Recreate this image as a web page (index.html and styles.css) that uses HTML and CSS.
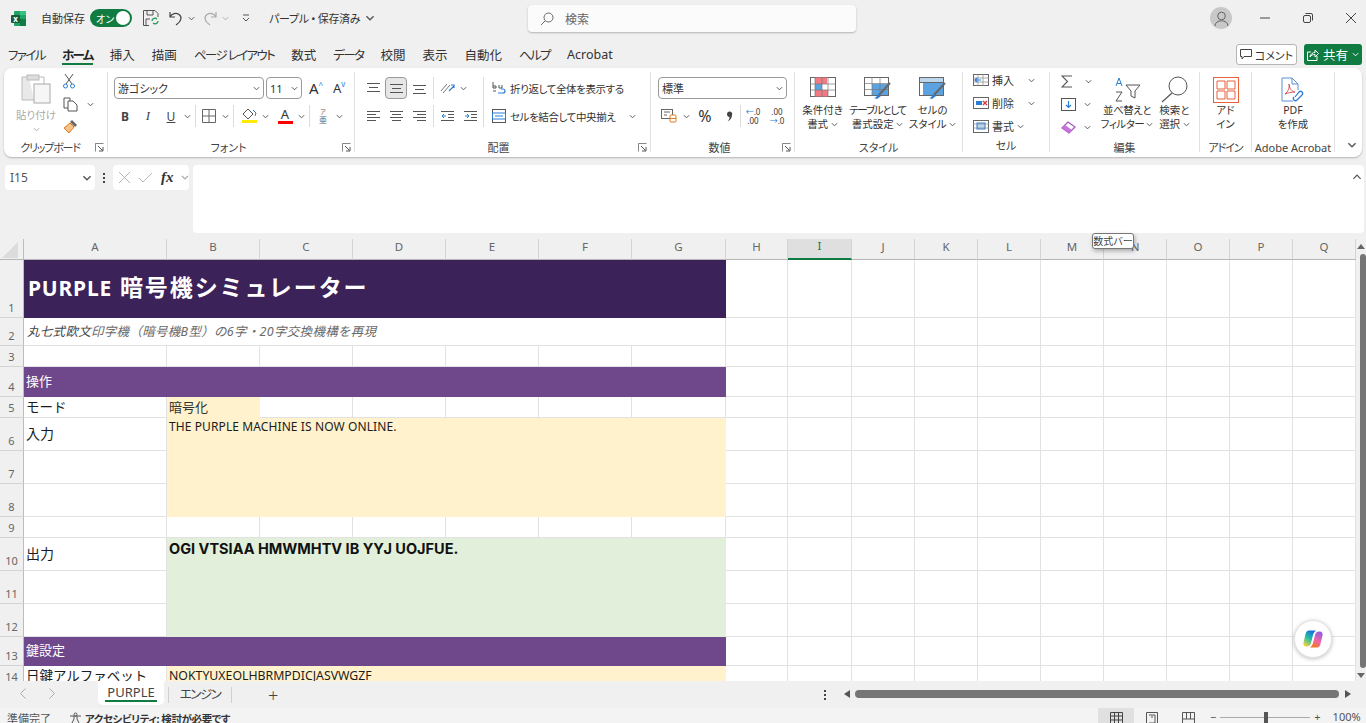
FILE: index.html
```html
<!DOCTYPE html>
<html lang="ja">

<head>
    <meta charset="UTF-8">
    <title>パープル - Excel</title>
    <link rel="stylesheet" href="styles.css">
</head>

<body>
    <svg class="defs" width="0" height="0">
        <symbol id="chev" viewBox="0 0 8 5"><path d="M1 1l3 3 3-3" fill="none" stroke="currentColor" stroke-width="1.1"/></symbol>
        <symbol id="launch" viewBox="0 0 9 9"><path d="M.5 5V.5H8.500M.5 .5V8.500" fill="none" stroke="#888"/><path d="M3 3l4.500 4.500M4 8h4V4" fill="none" stroke="#555"/></symbol>
    </svg>

    <header class="titlebar">
        <svg class="xl-logo" width="15" height="15" viewBox="0 0 15 15"><rect x="3" width="12" height="15" rx="1" fill="#21a366"/><rect x="9" width="6" height="4" fill="#33c481"/><rect x="9" y="8" width="6" height="7" fill="#107c41"/><rect y="4" width="9" height="8" rx="1" fill="#185c37"/><text x="4.500" y="10.500" text-anchor="middle" class="xl-x">x</text></svg>
        <span class="autosave">自動保存</span>
        <span class="toggle"><span>オン</span><i></i></span>
        <svg class="qa-save" width="16" height="16" viewBox="0 0 16 16"><path d="M.5 .5H12L15 3.500V7M6 15.500H.5V.5M4 .5V5H10V.5M3 15V9H7" fill="none" stroke="#555"/><path d="M9 11a3 3 0 0 1 5-2M15 11a3 3 0 0 1-5 2" fill="none" stroke="#2e9e5b" stroke-width="1.400"/></svg>
        <svg class="qa-undo" width="14" height="15" viewBox="0 0 14 15"><path d="M1 1V6H6M1 6C3 2.500 7 1.500 10 3.500S13 10 7 14" fill="none" stroke="#444" stroke-width="1.200"/></svg>
        <svg class="qa-chev" width="7" height="5"><use href="#chev"/></svg>
        <svg class="qa-redo" width="14" height="15" viewBox="0 0 14 15"><path d="M13 1V6H8M13 6C11 2.500 7 1.500 4 3.500S1 10 7 14" fill="none" stroke="#aaa" stroke-width="1.200"/></svg>
        <svg class="qa-chev pale" width="7" height="5"><use href="#chev"/></svg>
        <svg class="qa-more" width="8" height="8" viewBox="0 0 8 8"><path d="M1 1H7M1 4l3 3 3-3" fill="none" stroke="#555"/></svg>
        <span class="docname">パープル • 保存済み</span>
        <svg class="doc-chev" width="10" height="6"><use href="#chev"/></svg>
        <div class="searchbox">
            <svg width="14" height="14" viewBox="0 0 14 14"><circle cx="8.500" cy="5.500" r="4.500" fill="none" stroke="#666"/><path d="M5 9l-4 4" stroke="#666"/></svg>
            <span>検索</span>
        </div>
        <div class="win-btns">
            <span class="avatar"><svg width="15" height="15" viewBox="0 0 15 15"><circle cx="7.500" cy="5" r="3.800" fill="none" stroke="#666"/><path d="M1 15c0-7 13-7 13 0" fill="none" stroke="#666"/></svg></span>
            <svg class="win" width="10" height="10" viewBox="0 0 10 10"><path d="M0 5H10" stroke="#444"/></svg>
            <svg class="win" width="10" height="10" viewBox="0 0 10 10"><rect x=".5" y="2.500" width="7" height="7" rx="1.500" fill="none" stroke="#444"/><path d="M2.500 .5H8a1.500 1.500 0 0 1 1.500 1.500V7.500" fill="none" stroke="#444"/></svg>
            <svg class="win" width="10" height="10" viewBox="0 0 10 10"><path d="M0 0L10 10M10 0L0 10" stroke="#444"/></svg>
        </div>
    </header>

    <nav class="tabs">
        <a class="kana">ファイル</a>
        <a class="kana active">ホーム</a>
        <a>挿入</a>
        <a>描画</a>
        <a class="kana">ページ レイアウト</a>
        <a>数式</a>
        <a class="kana">データ</a>
        <a>校閲</a>
        <a>表示</a>
        <a>自動化</a>
        <a class="kana">ヘルプ</a>
        <a>Acrobat</a>
        <button class="comment-btn">
            <svg width="12" height="11" viewBox="0 0 12 11"><path d="M.5 .5H11.500V7.500H4L2 10V7.500H.5Z" fill="none" stroke="#444"/></svg>
            コメント
        </button>
        <button class="share-btn">
            <svg width="12" height="12" viewBox="0 0 12 12"><path d="M4 3H.5V11.500H10V7M3 8C3 5 6 3.500 8 3.500V1L11.500 4.500 8 8V5.500C6 5.500 4 6 3 8Z" fill="none" stroke="#fff"/></svg>
            共有
            <svg class="white" width="7" height="5"><use href="#chev"/></svg>
        </button>
    </nav>

    <section class="ribbon">
        <div class="group g-clip">
            <div class="body clip-body">
                <div class="paste">
                    <svg width="30" height="30" viewBox="0 0 30 30"><path d="M8 3H1V26H13" fill="#e9e9e9" stroke="#bbb"/><rect x="6" y="1" width="12" height="5" fill="#ddd" stroke="#bbb"/><path d="M18 3H23V10" fill="none" stroke="#bbb"/><rect x="13" y="10" width="16" height="19" fill="#f6f6f6" stroke="#aaa"/></svg>
                    <span>貼り付け</span>
                    <svg class="pale" width="7" height="5"><use href="#chev"/></svg>
                </div>
                <div class="clip-tools">
                    <svg width="12" height="16" viewBox="0 0 12 16"><path d="M2 1l7 10M10 1L3 11" stroke="#555"/><circle cx="2.500" cy="13" r="2" fill="none" stroke="#2b7cd3"/><circle cx="9.500" cy="13" r="2" fill="none" stroke="#2b7cd3"/></svg>
                    <span class="clip-copy">
                        <svg width="15" height="15" viewBox="0 0 15 15"><path d="M5 11H1V1H7V4" fill="none" stroke="#555"/><path d="M5 4H10L14 8V14H5Z" fill="#fff" stroke="#555"/></svg>
                        <svg class="copy-chev" width="7" height="5"><use href="#chev"/></svg>
                    </span>
                    <svg width="15" height="15" viewBox="0 0 15 15"><path d="M9 1l5 5-2 2-5-5Z" fill="#666"/><path d="M7 4L1 9l5 5 5-6Z" fill="#f5c28c" stroke="#e07a1f"/></svg>
                </div>
            </div>
            <div class="label">クリップボード</div>
            <svg class="launcher" width="9" height="9"><use href="#launch"/></svg>
        </div>

        <div class="group g-font">
            <div class="body rows">
                <div class="row">
                    <span class="select font-select">游ゴシック<svg width="7" height="5"><use href="#chev"/></svg></span>
                    <span class="select size-select">11<svg width="7" height="5"><use href="#chev"/></svg></span>
                    <span class="grow-a">A<sup>^</sup></span>
                    <span class="shrink-a">A<sup>v</sup></span>
                </div>
                <div class="row">
                    <span class="tool fmt bold">B</span>
                    <span class="tool fmt ital">I</span>
                    <span class="tool fmt under">U</span>
                    <svg class="mini" width="7" height="5"><use href="#chev"/></svg>
                    <i class="sep"></i>
                    <span class="tool"><svg width="14" height="14" viewBox="0 0 14 14"><path d="M.5 .5H13.500V13.500H.5ZM7 .5V13.500M.5 7H13.500" fill="none" stroke="#666"/></svg></span>
                    <svg class="mini" width="7" height="5"><use href="#chev"/></svg>
                    <i class="sep"></i>
                    <span class="tool fill-tool"><svg width="15" height="16" viewBox="0 0 15 16"><path d="M6 1L1 6l5 5 5-5Z" fill="none" stroke="#555"/><path d="M11 2l3 3-1 3" fill="none" stroke="#2b7cd3"/><rect y="12" width="15" height="3" fill="#ffeb00"/></svg></span>
                    <svg class="mini" width="7" height="5"><use href="#chev"/></svg>
                    <span class="tool color-a"><em>A</em></span>
                    <svg class="mini" width="7" height="5"><use href="#chev"/></svg>
                    <i class="sep"></i>
                    <span class="tool phonetic"><small>ア</small>亜</span>
                    <svg class="mini" width="7" height="5"><use href="#chev"/></svg>
                </div>
            </div>
            <div class="label">フォント</div>
            <svg class="launcher" width="9" height="9"><use href="#launch"/></svg>
        </div>

        <div class="group g-align">
            <div class="body align-body">
                <div class="rows">
                    <div class="row">
                        <span class="tool"><svg width="13" height="11" viewBox="0 0 13 11"><path d="M0 .5H13M2 4.500H11M0 8.500H13" stroke="#555"/></svg></span>
                        <span class="tool on"><svg width="13" height="11" viewBox="0 0 13 11"><path d="M0 1.500H13M2 5.500H11M0 9.500H13" stroke="#555"/></svg></span>
                        <span class="tool"><svg width="13" height="11" viewBox="0 0 13 11"><path d="M0 2.500H13M2 6.500H11M0 10.500H13" stroke="#555"/></svg></span>
                        <i class="sep"></i>
                        <span class="tool"><svg width="16" height="14" viewBox="0 0 16 14"><path d="M2 10L8 3M4 12l7-8" stroke="#777"/><path d="M10 10l5-5M12 4h3v3" fill="none" stroke="#2b7cd3" stroke-width="1.200"/></svg></span>
                        <svg class="mini" width="7" height="5"><use href="#chev"/></svg>
                    </div>
                    <div class="row">
                        <span class="tool"><svg width="13" height="11" viewBox="0 0 13 11"><path d="M0 .5H13M0 3.500H9M0 6.500H13M0 9.500H9" stroke="#555"/></svg></span>
                        <span class="tool"><svg width="13" height="11" viewBox="0 0 13 11"><path d="M0 .5H13M2 3.500H11M0 6.500H13M2 9.500H11" stroke="#555"/></svg></span>
                        <span class="tool"><svg width="13" height="11" viewBox="0 0 13 11"><path d="M0 .5H13M4 3.500H13M0 6.500H13M4 9.500H13" stroke="#555"/></svg></span>
                        <i class="sep"></i>
                        <span class="tool"><svg width="13" height="11" viewBox="0 0 13 11"><path d="M0 .5H13M7 3.500H13M7 6.500H13M0 9.500H13" stroke="#555"/><path d="M5 5H1M3 3L1 5l2 2" fill="none" stroke="#2b7cd3"/></svg></span>
                        <span class="tool"><svg width="13" height="11" viewBox="0 0 13 11"><path d="M0 .5H13M7 3.500H13M7 6.500H13M0 9.500H13" stroke="#555"/><path d="M1 5H5M3 3l2 2-2 2" fill="none" stroke="#2b7cd3"/></svg></span>
                    </div>
                </div>
                <i class="sep tall"></i>
                <div class="rows wrap-col">
                    <div class="row textrow">
                        <svg width="14" height="14" viewBox="0 0 14 14"><path d="M1 1V7M1 5h3v2H1M7 4v3h3V4M1 10h3" fill="none" stroke="#555"/><path d="M6 12h5a2 2 0 0 0 0-4H9" fill="none" stroke="#2b7cd3" stroke-width="1.200"/></svg>
                        <span>折り返して全体を表示する</span>
                    </div>
                    <div class="row textrow">
                        <svg width="14" height="14" viewBox="0 0 14 14"><rect x=".5" y=".5" width="13" height="13" fill="none" stroke="#555"/><rect x=".5" y="4" width="13" height="6" fill="#fff" stroke="#2b7cd3"/><path d="M3 7H11" stroke="#2b7cd3"/></svg>
                        <span>セルを結合して中央揃え</span>
                        <svg class="merge-chev" width="7" height="5"><use href="#chev"/></svg>
                    </div>
                </div>
            </div>
            <div class="label">配置</div>
            <svg class="launcher" width="9" height="9"><use href="#launch"/></svg>
        </div>

        <div class="group g-num">
            <div class="body rows">
                <div class="row">
                    <span class="select num-select">標準<svg width="7" height="5"><use href="#chev"/></svg></span>
                </div>
                <div class="row num-tools">
                    <span class="tool"><svg width="16" height="14" viewBox="0 0 16 14"><rect x=".5" y=".5" width="11" height="9" fill="none" stroke="#666"/><path d="M3 3H9M3 6H6" stroke="#666"/><rect x="9" y="6" width="6" height="7" rx="1" fill="#fff" stroke="#e07a1f"/><path d="M9 9.500H15" stroke="#e07a1f"/></svg></span>
                    <svg class="mini" width="7" height="5"><use href="#chev"/></svg>
                    <span class="tool percent">%</span>
                    <span class="tool comma"><svg width="7" height="11" viewBox="0 0 7 11"><path d="M1 3a2.600 2.600 0 1 1 5 1C6 7 4 9.500 1.500 10.500 3 9 3.500 7.500 3.500 6 2 6 1 5 1 3Z" fill="#444"/></svg></span>
                    <i class="sep"></i>
                    <span class="tool dec"><b>←</b>.0<br>.00</span>
                    <span class="tool dec">.00<br><b>→</b>.0</span>
                </div>
            </div>
            <div class="label">数値</div>
            <svg class="launcher" width="9" height="9"><use href="#launch"/></svg>
        </div>

        <div class="group g-style">
            <div class="body bigs">
                <div class="big">
                    <svg width="26" height="20" viewBox="0 0 26 20"><rect x=".5" y=".5" width="25" height="19" fill="#fff" stroke="#666"/><path d="M5 .5H17V7H5ZM5 13H18V19.500H5Z" fill="#f27a85"/><rect x="5" y="7" width="7" height="6" fill="#5aa2e0"/><path d="M0 7H26M0 13H26M5 0V20M12 0V20M18 0V20" stroke="#777" stroke-width=".7"/></svg>
                    <span>条件付き<br>書式 <svg width="7" height="5"><use href="#chev"/></svg></span>
                </div>
                <div class="big">
                    <svg width="27" height="22" viewBox="0 0 27 22"><rect x=".5" y=".5" width="24" height="18" fill="#fff" stroke="#666"/><rect x="8" y="7" width="16" height="11" fill="#5aa2e0"/><path d="M0 6.500H25M0 12.500H25M8 0V19M16 0V19" stroke="#777" stroke-width=".7"/><path d="M26 6L15 18" stroke="#666" stroke-width="2"/><path d="M14 17l3 2-4 3-3-1c2 0 3-2 4-4Z" fill="#2b7cd3"/></svg>
                    <span><em class="tight">テーブルとして</em><br>書式設定 <svg width="7" height="5"><use href="#chev"/></svg></span>
                </div>
                <div class="big">
                    <svg width="27" height="22" viewBox="0 0 27 22"><rect x=".5" y=".5" width="24" height="18" fill="#fff" stroke="#666"/><rect x=".5" y=".5" width="24" height="5" fill="#bcd6ee" stroke="#666"/><rect x="4" y="6" width="20" height="12" fill="#5aa2e0"/><path d="M26 6L15 18" stroke="#666" stroke-width="2"/><path d="M14 17l3 2-4 3-3-1c2 0 3-2 4-4Z" fill="#2b7cd3"/></svg>
                    <span>セルの<br>スタイル <svg width="7" height="5"><use href="#chev"/></svg></span>
                </div>
            </div>
            <div class="label">スタイル</div>
        </div>

        <div class="group g-cells">
            <div class="body list">
                <div class="item">
                    <svg width="16" height="12" viewBox="0 0 16 12"><rect x=".5" y=".5" width="15" height="11" fill="#fff" stroke="#666"/><path d="M0 4H16M0 8H16M5 0V12M10 0V12" stroke="#888" stroke-width=".7"/><path d="M8 6H2M4 4L2 6l2 2" fill="none" stroke="#2b7cd3" stroke-width="1.200"/></svg>
                    <span>挿入</span>
                    <svg class="far" width="7" height="5"><use href="#chev"/></svg>
                </div>
                <div class="item">
                    <svg width="16" height="12" viewBox="0 0 16 12"><rect x=".5" y=".5" width="15" height="11" fill="#fff" stroke="#666"/><rect x="3" y="4" width="6" height="4" fill="#2b7cd3"/><path d="M10 4l4 4M14 4l-4 4" stroke="#d13438" stroke-width="1.200"/></svg>
                    <span>削除</span>
                    <svg class="far" width="7" height="5"><use href="#chev"/></svg>
                </div>
                <div class="item">
                    <svg width="16" height="14" viewBox="0 0 16 14"><rect x=".5" y="1.500" width="15" height="12" fill="#fff" stroke="#666"/><rect x="4" y="4" width="8" height="6" fill="#bcd6ee" stroke="#2b7cd3"/><path d="M0 5H16M0 9H16" stroke="#888" stroke-width=".7"/></svg>
                    <span>書式</span>
                    <svg class="near" width="7" height="5"><use href="#chev"/></svg>
                </div>
            </div>
            <div class="label">セル</div>
        </div>

        <div class="group g-edit">
            <div class="body bigs">
                <div class="list edit-list">
                    <div class="item"><svg width="12" height="13" viewBox="0 0 12 13"><path d="M11 1H1L6.500 6.500 1 12H11" fill="none" stroke="#555" stroke-width="1.100"/></svg><svg class="sum-chev" width="7" height="5"><use href="#chev"/></svg></div>
                    <div class="item"><svg width="15" height="13" viewBox="0 0 15 13"><rect x=".5" y=".5" width="14" height="12" fill="#fff" stroke="#555"/><path d="M7.500 3V9M5 7l2.500 2.500L10 7" fill="none" stroke="#2b7cd3" stroke-width="1.200"/></svg><svg class="near" width="7" height="5"><use href="#chev"/></svg></div>
                    <div class="item"><svg width="15" height="13" viewBox="0 0 15 13"><path d="M1 7l6-6 7 5-6 6Z" fill="#fff" stroke="#a94fc0" stroke-width="1.200"/><path d="M1 7l3-3 7 5-3 3Z" fill="#c675dc"/></svg><svg class="near" width="7" height="5"><use href="#chev"/></svg></div>
                </div>
                <div class="big sort">
                    <svg width="26" height="26" viewBox="0 0 26 26"><path d="M2 9L5 1 8 9M3 6.500H7" fill="none" stroke="#2b7cd3"/><path d="M2 15H8L2 24H8" fill="none" stroke="#555"/><path d="M12 8H26L21 14V21L17 19V14Z" fill="#fff" stroke="#555"/></svg>
                    <span>並べ替えと<br>フィルター <svg width="7" height="5"><use href="#chev"/></svg></span>
                </div>
                <div class="big find">
                    <svg width="27" height="27" viewBox="0 0 27 27"><circle cx="17" cy="10" r="9" fill="#fff" stroke="#555"/><path d="M11 17L1 26" stroke="#555" stroke-width="1.200"/></svg>
                    <span>検索と<br>選択 <svg width="7" height="5"><use href="#chev"/></svg></span>
                </div>
            </div>
            <div class="label">編集</div>
        </div>

        <div class="group g-addin">
            <div class="body bigs">
                <div class="big wide">
                    <svg width="26" height="26" viewBox="0 0 26 26"><rect x=".5" y=".5" width="25" height="25" fill="#fff" stroke="#e8613c"/><path d="M4 4H12V12H4ZM14 4H22V12H14ZM4 14H12V22H4ZM14 14H22V22H14Z" fill="none" stroke="#e8613c"/></svg>
                    <span>アド<br>イン</span>
                </div>
            </div>
            <div class="label">アドイン</div>
        </div>

        <div class="group g-adobe">
            <div class="body bigs">
                <div class="big wide">
                    <svg width="24" height="26" viewBox="0 0 24 26"><path d="M1 1H11L17 7V13M12 24H1V1M11 1V7H17" fill="none" stroke="#5b8fd0"/><path d="M4 17C7 15 9 10 8 7 8 11 11 15 14 15 10 15 7 16 4 17Z" fill="none" stroke="#d13438" stroke-width=".8"/><path d="M14 20l4-5a2 2 0 0 1 3 3l-5 5a2 2 0 0 1-3-3" fill="none" stroke="#2b7cd3" stroke-width="1.200"/></svg>
                    <span>PDF<br>を作成</span>
                </div>
            </div>
            <div class="label">Adobe Acrobat</div>
        </div>

        <svg class="collapse" width="10" height="6"><use href="#chev"/></svg>
    </section>

    <section class="formula">
        <div class="namebox">I15<svg width="10" height="6"><use href="#chev"/></svg></div>
        <div class="dots"><i></i><i></i><i></i></div>
        <div class="fx-box">
            <svg width="13" height="13" viewBox="0 0 13 13"><path d="M1 1L12 12M12 1L1 12" stroke="#b5b5b5"/></svg>
            <svg width="15" height="11" viewBox="0 0 15 11"><path d="M1 6l4 4L14 1" fill="none" stroke="#b5b5b5"/></svg>
            <span class="fx">fx</span>
            <svg class="pale" width="8" height="5"><use href="#chev"/></svg>
        </div>
        <div class="formula-input">
            <svg width="10" height="6" viewBox="0 0 8 5"><path d="M1 4l3-3 3 3" fill="none" stroke="#555"/></svg>
        </div>
    </section>

    <section class="sheet">
        <div class="grid-wrap">
            <table class="grid">
                <colgroup>
                    <col class="c-head"><col class="c-a"><col class="c-b"><col class="c-b"><col class="c-b"><col class="c-b"><col class="c-b"><col class="c-g"><col class="c-h"><col class="c-i"><col class="c-n"><col class="c-n"><col class="c-n"><col class="c-n"><col class="c-n"><col class="c-n"><col class="c-n"><col class="c-n">
                </colgroup>
                <tr class="r-head">
                    <th class="corner"><svg width="16" height="16" viewBox="0 0 16 16"><path d="M16 0V16H0Z" fill="#dcdcdc"/></svg></th>
                    <th>A</th><th>B</th><th>C</th><th>D</th><th>E</th><th>F</th><th>G</th><th>H</th><th class="sel">I</th><th>J</th><th>K</th><th>L</th><th>M</th><th>N</th><th>O</th><th>P</th><th>Q</th>
                </tr>
                <tr class="r58">
                    <th>1</th><td colspan="7" class="title"><span class="title-latin">PURPLE</span> 暗号機シミュレーター</td>
                    <td></td><td></td><td></td><td></td><td></td><td></td><td></td><td></td><td></td><td></td>
                </tr>
                <tr class="r28">
                    <th>2</th><td colspan="7" class="sub"><span class="sub-dark">丸七式欧文</span>印字機（暗号機B型）の6字・20字交換機構を再現</td>
                    <td></td><td></td><td></td><td></td><td></td><td></td><td></td><td></td><td></td><td></td>
                </tr>
                <tr class="r21">
                    <th>3</th><td></td><td></td><td></td><td></td><td></td><td></td><td></td>
                    <td></td><td></td><td></td><td></td><td></td><td></td><td></td><td></td><td></td><td></td>
                </tr>
                <tr class="r30">
                    <th>4</th><td colspan="7" class="section">操作</td>
                    <td></td><td></td><td></td><td></td><td></td><td></td><td></td><td></td><td></td><td></td>
                </tr>
                <tr class="r21">
                    <th>5</th><td class="lab">モード</td><td class="yellow mode">暗号化</td><td></td><td></td><td></td><td></td><td></td>
                    <td></td><td></td><td></td><td></td><td></td><td></td><td></td><td></td><td></td><td></td>
                </tr>
                <tr class="r33">
                    <th>6</th><td class="lab mid">入力</td><td colspan="6" rowspan="3" class="yellow input">THE PURPLE MACHINE IS NOW ONLINE.</td>
                    <td></td><td></td><td></td><td></td><td></td><td></td><td></td><td></td><td></td><td></td>
                </tr>
                <tr class="r33">
                    <th>7</th><td></td>
                    <td></td><td></td><td></td><td></td><td></td><td></td><td></td><td></td><td></td><td></td>
                </tr>
                <tr class="r33">
                    <th>8</th><td></td>
                    <td></td><td></td><td></td><td></td><td></td><td></td><td></td><td></td><td></td><td></td>
                </tr>
                <tr class="r21">
                    <th>9</th><td></td><td></td><td></td><td></td><td></td><td></td><td></td>
                    <td></td><td></td><td></td><td></td><td></td><td></td><td></td><td></td><td></td><td></td>
                </tr>
                <tr class="r33">
                    <th>10</th><td class="lab mid">出力</td><td colspan="6" rowspan="3" class="green output">OGI VTSIAA HMWMHTV IB YYJ UOJFUE.</td>
                    <td></td><td></td><td></td><td></td><td></td><td></td><td></td><td></td><td></td><td></td>
                </tr>
                <tr class="r33">
                    <th>11</th><td></td>
                    <td></td><td></td><td></td><td></td><td></td><td></td><td></td><td></td><td></td><td></td>
                </tr>
                <tr class="r33">
                    <th>12</th><td></td>
                    <td></td><td></td><td></td><td></td><td></td><td></td><td></td><td></td><td></td><td></td>
                </tr>
                <tr class="r29">
                    <th>13</th><td colspan="7" class="section">鍵設定</td>
                    <td></td><td></td><td></td><td></td><td></td><td></td><td></td><td></td><td></td><td></td>
                </tr>
                <tr class="r21">
                    <th>14</th><td class="lab key">日鍵アルファベット</td><td colspan="6" class="yellow alpha">NOKTYUXEOLHBRMPDICJASVWGZF</td>
                    <td></td><td></td><td></td><td></td><td></td><td></td><td></td><td></td><td></td><td></td>
                </tr>
            </table>
        </div>
        <div class="vscroll"><i class="up"></i><i class="thumb"></i><i class="down"></i></div>
        <div class="tooltip">数式バー</div>
        <div class="copilot">
            <svg width="20" height="20" viewBox="0 0 20 20">
                <defs>
                    <linearGradient id="cpA" x1="0.7" y1="0" x2="0.2" y2="1"><stop offset="0" stop-color="#1769e0"/><stop offset=".5" stop-color="#25bfa6"/><stop offset="1" stop-color="#f7d53a"/></linearGradient>
                    <linearGradient id="cpB" x1="0.8" y1="0" x2="0.3" y2="1"><stop offset="0" stop-color="#8f5be8"/><stop offset=".55" stop-color="#ee66a8"/><stop offset="1" stop-color="#f9771f"/></linearGradient>
                </defs>
                <path d="M6 1.500H13C11 3 10 5 9.500 8L8 14C7.500 16 6 17.500 4 17.500H3C1 17.500 0 15.500 .5 13.500L2.500 5C3 2.500 4.500 1.500 6 1.500Z" fill="url(#cpA)"/>
                <path d="M14 18.500H7C9 17 10 15 10.500 12L12 6C12.500 4 14 2.500 16 2.500H17C19 2.500 20 4.500 19.500 6.500L17.500 15C17 17.500 15.500 18.500 14 18.500Z" fill="url(#cpB)"/>
            </svg>
        </div>
    </section>

    <section class="sheetbar">
        <div class="sheet-nav">
            <svg width="6" height="11" viewBox="0 0 6 11"><path d="M5.500 .5L.5 5.500l5 5" fill="none" stroke="#aaa"/></svg>
            <svg width="6" height="11" viewBox="0 0 6 11"><path d="M.5 .5l5 5-5 5" fill="none" stroke="#aaa"/></svg>
        </div>
        <div class="sheet-tab active">PURPLE</div>
        <i class="tab-sep"></i>
        <div class="sheet-tab">エンジン</div>
        <i class="tab-sep"></i>
        <span class="add-sheet">+</span>
        <span class="kebab"><i></i><i></i><i></i></span>
        <i class="arrow-left"></i>
        <div class="hscroll"></div>
        <i class="arrow-right"></i>
    </section>

    <footer class="status">
        <span class="ready">準備完了</span>
        <svg width="11" height="11" viewBox="0 0 11 11"><circle cx="5.500" cy="2.500" r="1.500" fill="none" stroke="#555"/><path d="M0 4H11M4 4V7L2 11M7 4V7L9 11" fill="none" stroke="#555"/></svg>
        <span class="a11y">アクセシビリティ: 検討が必要です</span>
        <div class="views">
            <span class="view on"><svg width="13" height="11" viewBox="0 0 13 11"><path d="M.5 .5H12.500V11M.5 .5V11M.5 4H12.500M.5 8H12.500M4.500 0V11M8.500 0V11" fill="none" stroke="#444"/></svg></span>
            <span class="view"><svg width="12" height="11" viewBox="0 0 12 11"><path d="M.5 11V.5H11.500V11M3 3H9V11H3M5 5H7" fill="none" stroke="#555"/></svg></span>
            <span class="view"><svg width="13" height="11" viewBox="0 0 13 11"><path d="M.5 11V.5H12.500V11M4.500 1V7M8.500 1V7M.5 7H12.500" fill="none" stroke="#555"/></svg></span>
        </div>
        <div class="zoom">
            <span>−</span>
            <div class="slider"><i></i></div>
            <span>+</span>
            <span class="pct">100%</span>
        </div>
    </footer>
</body>

</html>
```

FILE: styles.css
```css
* {
    margin: 0px;
    padding: 0px;
    box-sizing: border-box;
}

body {
    width: 1366px;
    height: 723px;
    overflow: hidden;
    position: relative;
    display: flex;
    flex-direction: column;
    background-color: #f0f0f0;
    color: #333;
    font-family: "Noto Sans", "Noto Sans CJK JP", sans-serif;
    font-size: 11px;
    font-feature-settings: "palt";
}

i,
em {
    font-style: normal;
}

svg {
    flex: none;
    color: #555;
}

svg.white {
    color: #fff;
}

svg.pale {
    color: #aaa;
}

.defs {
    position: absolute;
}

/* title bar */
.titlebar {
    height: 36px;
    display: flex;
    align-items: center;
    flex: none;
}

.xl-logo {
    margin-left: 11px;
}

.xl-x {
    font-size: 8px;
    font-weight: 700;
    fill: #fff;
}

.autosave {
    margin-left: 15px;
    width: 49px;
    font-size: 11px;
}

.toggle {
    width: 42px;
    height: 18px;
    border-radius: 9px;
    background-color: #107c41;
    color: #fff;
    font-size: 10px;
    display: flex;
    align-items: center;
    justify-content: space-between;
    padding: 0 2px 0 6px;
}

.toggle i {
    width: 14px;
    height: 14px;
    border-radius: 50%;
    background-color: #fff;
}

.qa-save {
    margin-left: 11px;
}

.qa-undo {
    margin-left: 10px;
}

.qa-chev {
    margin-left: 5px;
}

.qa-redo {
    margin-left: 8px;
}

.qa-more {
    margin-left: 13px;
}

.docname {
    margin-left: 19px;
    width: 95px;
    font-size: 11px;
    letter-spacing: -0.300px;
    white-space: nowrap;
}

.doc-chev {
    margin-left: 1px;
}

.searchbox {
    position: absolute;
    left: 528px;
    top: 5px;
    width: 328px;
    height: 27px;
    background-color: #fbfbfb;
    border-radius: 4px;
    box-shadow: 0 1px 2px rgba(0, 0, 0, 0.25);
    display: flex;
    align-items: center;
    padding-left: 12px;
    gap: 11px;
    color: #666;
    font-size: 12px;
}

.win-btns {
    margin-left: auto;
    display: flex;
    align-items: center;
    padding-right: 10px;
}

.avatar {
    width: 22px;
    height: 22px;
    border-radius: 50%;
    background-color: #c8c8c8;
    display: flex;
    align-items: center;
    justify-content: center;
    margin-right: 28px;
}

.win {
    margin-right: 33px;
}

.win:last-child {
    margin-right: 0;
}

/* ribbon tabs */
.tabs {
    height: 32px;
    flex: none;
    display: flex;
    align-items: center;
    gap: 17px;
    padding: 5px 4px 0 8px;
    font-size: 12.500px;
    white-space: nowrap;
    color: #333;
}

.tabs a {
    position: relative;
}

.tabs a.kana {
    letter-spacing: -1.600px;
}

.tabs a.active {
    font-weight: 700;
    color: #222;
}

.tabs a.active::after {
    content: "";
    position: absolute;
    left: 0;
    right: 0;
    bottom: -1px;
    height: 2px;
    background-color: #107c41;
}

.comment-btn {
    margin-left: auto;
    width: 61px;
    height: 21px;
    border: 1px solid #b5b5b5;
    border-radius: 3px;
    background-color: #fff;
    color: #333;
    font: inherit;
    font-size: 11px;
    display: flex;
    align-items: center;
    justify-content: center;
    gap: 3px;
}

.share-btn {
    margin-left: -10px;
    width: 58px;
    height: 21px;
    border: none;
    border-radius: 3px;
    background-color: #107c41;
    color: #fff;
    font: inherit;
    font-size: 12.500px;
    display: flex;
    align-items: center;
    justify-content: center;
    gap: 4px;
}

/* ribbon */
.ribbon {
    height: 89px;
    flex: none;
    margin: 0 4px;
    padding: 4px 0 5px;
    background-color: #fff;
    border-radius: 8px;
    box-shadow: 0 1px 2px rgba(0, 0, 0, 0.25);
    display: flex;
    position: relative;
}

.group {
    height: 80px;
    position: relative;
    border-right: 1px solid #e1e1e1;
    flex: none;
}

.group .body {
    height: 68px;
}

.label {
    height: 16px;
    line-height: 16px;
    text-align: center;
    font-size: 11px;
    white-space: nowrap;
    color: #444;
}

.launcher {
    position: absolute;
    right: 3px;
    bottom: 0px;
}

.g-clip {
    width: 104px;
}

.g-clip .label {
    padding-right: 11px;
    letter-spacing: -1.200px;
}

.g-font {
    width: 247px;
    padding-left: 6px;
}

.g-font .label {
    padding-right: 11px;
}

.g-align {
    width: 296px;
    padding-left: 7px;
}

.g-align .label {
    padding-right: 15px;
}

.g-num {
    width: 144px;
    padding-left: 7px;
}

.g-num .label {
    padding-right: 13px;
}

.g-style {
    width: 168px;
}

.g-cells {
    width: 87px;
}

.g-edit {
    width: 150px;
}

.g-addin {
    width: 52px;
}

.g-addin .label {
    letter-spacing: -1px;
}

.g-adobe {
    width: 83px;
}

.clip-body {
    display: flex;
}

.paste {
    width: 50px;
    margin-left: 7px;
    display: flex;
    flex-direction: column;
    align-items: center;
    padding-top: 2px;
    color: #aaa;
    font-size: 10.500px;
}

.paste span {
    margin-top: 3px;
    white-space: nowrap;
}

.paste svg:last-child {
    margin-top: 5px;
}

.clip-tools {
    width: 40px;
    display: flex;
    flex-direction: column;
    justify-content: space-between;
    align-items: flex-start;
    padding: 1px 0 6px 2px;
    margin-left: 0;
}

.clip-copy {
    display: flex;
    align-items: center;
}

.copy-chev {
    margin-left: 9px;
}

.rows {
    display: flex;
    flex-direction: column;
    gap: 6px;
    padding-top: 5px;
}

.row {
    height: 22px;
    display: flex;
    align-items: center;
}

.select {
    height: 22px;
    border: 1px solid #9a9a9a;
    border-radius: 4px;
    display: flex;
    align-items: center;
    justify-content: space-between;
    padding: 0 3px;
    font-size: 11px;
}

.font-select {
    width: 150px;
}

.size-select {
    width: 36px;
    margin-left: 2px;
}

.num-select {
    width: 129px;
}

.grow-a,
.shrink-a {
    font-size: 15px;
    margin-left: 7px;
    width: 17px;
    white-space: nowrap;
}

.shrink-a {
    font-size: 13px;
    margin-left: 7px;
}

sup {
    font-size: 8px;
    color: #2b7cd3;
    vertical-align: 6px;
    line-height: 0;
}

.tool {
    width: 22px;
    height: 22px;
    margin-right: 1px;
    display: flex;
    align-items: center;
    justify-content: center;
    flex: none;
}

.tool.on {
    background-color: #e6e6e6;
    border: 1px solid #9a9a9a;
    border-radius: 4px;
}

.fmt {
    font-size: 12px;
    color: #444;
}

.bold {
    font-weight: 700;
}

.ital {
    font-style: italic;
    font-family: "Liberation Serif", serif;
    font-size: 13px;
}

.under {
    text-decoration: underline;
}

.mini {
    margin: 0 2px 0 1px;
}

.sep {
    width: 1px;
    height: 22px;
    background-color: #dcdcdc;
    margin: 0 2px;
    flex: none;
}

.sep.tall {
    height: 50px;
    margin: 5px 6px 0 0;
}

.fill-tool {
    margin-left: 2px;
}

.color-a {
    margin-left: 3px;
}

.color-a em {
    font-size: 13px;
    line-height: 13px;
    border-bottom: 3px solid #f00;
    width: 15px;
    text-align: center;
}

.phonetic {
    flex-direction: column;
    font-size: 8px;
    line-height: 8px;
    color: #666;
}

.phonetic small {
    font-size: 6px;
    line-height: 7px;
}

.align-body {
    display: flex;
}

.align-body > .rows {
    width: 121px;
}

.textrow {
    gap: 4px;
    font-size: 10.500px;
    letter-spacing: -0.400px;
    white-space: nowrap;
}

.wrap-col {
    padding-left: 2px;
    flex: 1;
}

.merge-chev {
    margin-left: 10px;
}

.num-tools .tool {
    margin-right: 2px;
}

.percent {
    font-size: 16px;
    margin-left: 2px;
}

.num-tools .comma {
    margin-right: 0;
}

.num-tools .sep {
    margin: 0 1px 0 0;
}

.dec {
    font-size: 8px;
    line-height: 9px;
    display: block;
    padding-top: 2px;
    text-align: center;
    white-space: nowrap;
}

.dec b {
    color: #2b7cd3;
    font-weight: 400;
}

/* big buttons */
.bigs {
    display: flex;
}

.big {
    width: 55px;
    display: flex;
    flex-direction: column;
    align-items: center;
    padding-top: 5px;
    font-size: 10.500px;
    line-height: 13.500px;
    text-align: center;
    white-space: nowrap;
}

.big span {
    margin-top: auto;
    margin-bottom: 9px;
}

.big span svg {
    margin-bottom: 1px;
}

.tight {
    letter-spacing: -1.300px;
}

.list {
    display: flex;
    flex-direction: column;
    gap: 3px;
    margin-top: -2px;
    padding-left: 10px;
}

.item {
    height: 20px;
    display: flex;
    align-items: center;
    font-size: 11px;
    white-space: nowrap;
}

.item span {
    margin-left: 3px;
}

.far {
    margin-left: 14px;
}

.near {
    margin-left: 3px;
}

.edit-list {
    width: 52px;
    padding-left: 11px;
    margin-top: -1px;
}

.edit-list .near {
    margin-left: 8px;
}

.edit-list .sum-chev {
    margin-left: 12px;
}

.sort {
    width: 50px;
    letter-spacing: -0.500px;
}

.find {
    width: 45px;
    padding-top: 4px;
}

.big.wide {
    width: 100%;
}

.collapse {
    position: absolute;
    right: 5px;
    bottom: 9px;
}

/* formula bar */
.formula {
    height: 68px;
    flex: none;
    margin-top: 8px;
    padding: 0 2px 0 5px;
    display: flex;
    align-items: flex-start;
}

.namebox {
    width: 90px;
    height: 25px;
    background-color: #fff;
    border-radius: 4px;
    display: flex;
    align-items: center;
    justify-content: space-between;
    padding: 0 3px 0 5px;
    font-size: 12px;
    color: #555;
}

.dots {
    width: 18px;
    height: 25px;
    display: flex;
    flex-direction: column;
    align-items: center;
    justify-content: center;
    gap: 2px;
}

.dots i {
    width: 2px;
    height: 2px;
    background-color: #444;
}

.fx-box {
    width: 76px;
    height: 25px;
    background-color: #fff;
    border-radius: 4px;
    display: flex;
    align-items: center;
    padding-left: 5px;
    gap: 7px;
}

.fx {
    font-family: "Liberation Serif", serif;
    font-style: italic;
    font-weight: 700;
    font-size: 15px;
    color: #333;
    margin-left: 1px;
}

.formula-input {
    flex: 1;
    height: 68px;
    margin-left: 4px;
    background-color: #fff;
    border-radius: 4px;
    display: flex;
    justify-content: flex-end;
    padding: 9px 2px 0 0;
}

/* sheet */
.sheet {
    height: 442px;
    flex: none;
    margin-top: 6px;
    position: relative;
    display: flex;
    background-color: #f0f0f0;
}

.grid-wrap {
    width: 1356px;
    height: 442px;
    overflow: hidden;
}

.grid {
    width: 1356px;
    table-layout: fixed;
    border-collapse: separate;
    border-spacing: 0;
    background-color: #fff;
    font-feature-settings: normal;
}

.c-head {
    width: 24px;
}

.c-a {
    width: 143px;
}

.c-b {
    width: 93px;
}

.c-g {
    width: 94px;
}

.c-h {
    width: 62px;
}

.c-i {
    width: 64px;
}

.c-n {
    width: 63px;
}

.grid th {
    background-color: #f0f0f0;
    font-weight: 400;
    font-size: 11px;
    line-height: 14px;
    color: #666;
    border-right: 1px solid #d4d4d4;
    border-bottom: 1px solid #d4d4d4;
    padding: 0;
    vertical-align: bottom;
    padding-bottom: 2px;
}

.grid tr > th:first-child {
    border-right: 1px solid #bdbdbd;
}

.grid td {
    border-right: 1px solid #e2e2e2;
    border-bottom: 1px solid #e2e2e2;
    padding: 0 2px;
    overflow: hidden;
    white-space: nowrap;
    color: #1c1c1c;
    font-size: 13.500px;
    line-height: 16px;
}

.r-head > * {
    height: 21px;
}

.r-head th {
    font-size: 11.500px;
    padding-bottom: 5px;
    border-bottom: 1px solid #b5b5b5;
}

.grid th.corner {
    padding: 0 0 1px 2px;
    text-align: left;
    border-right: none;
}

.corner svg {
    display: block;
}

.grid th.sel {
    background-color: #dfdfdf;
    color: #107c41;
    border-bottom: 2px solid #107c41;
}

.r58 > * {
    height: 58px;
}

.r28 > * {
    height: 28px;
}

.r21 > * {
    height: 21px;
}

.r30 > * {
    height: 30px;
}

.r33 > * {
    height: 33px;
}

.r29 > * {
    height: 29px;
}

.grid td.title {
    background-color: #3b2259;
    color: #fff;
    font-size: 23px;
    font-weight: 700;
    letter-spacing: 1.900px;
    padding: 0 0 2px 4px;
    line-height: 28px;
    border-color: #3b2259;
}

.title-latin {
    font-size: 21px;
    letter-spacing: 0.800px;
}

.grid td.sub {
    font-style: italic;
    color: #6a6a6a;
    font-size: 12.500px;
    padding-left: 3px;
    letter-spacing: 0.300px;
}

.sub-dark {
    color: #444;
}

.grid td.section {
    background-color: #6f478b;
    color: #fff;
    font-size: 13px;
    border-color: #6f478b;
    padding-bottom: 2px;
}

.lab {
    color: #222;
}

.grid td.mid {
    font-size: 14px;
}

.grid td.key {
    font-size: 13.500px;
    vertical-align: top;
    padding-top: 2px;
}

.grid td.yellow {
    background-color: #fff2cc;
    border-color: #fff2cc;
}

.grid td.green {
    background-color: #e2efda;
    border-color: #e2efda;
}

.grid td.input {
    vertical-align: top;
    font-size: 12px;
    letter-spacing: 0.100px;
    padding-top: 1px;
}

.grid td.output {
    vertical-align: top;
    font-family: Inter, "Noto Sans", sans-serif;
    font-size: 14.500px;
    font-weight: 700;
    color: #111;
    padding-top: 1px;
    line-height: 20px;
}

.grid td.mode {
    font-size: 13px;
    color: #333;
    padding-left: 2px;
}

.grid td.alpha {
    font-size: 12.300px;
    vertical-align: top;
    padding-top: 2px;
}

.vscroll {
    width: 10px;
    height: 442px;
    position: relative;
}

.vscroll .up,
.vscroll .down {
    position: absolute;
    right: 1px;
    border-left: 4px solid transparent;
    border-right: 4px solid transparent;
}

.vscroll .up {
    top: 5px;
    border-bottom: 5px solid #666;
}

.vscroll .down {
    bottom: 3px;
    border-top: 5px solid #666;
}

.vscroll .thumb {
    position: absolute;
    top: 15px;
    bottom: 13px;
    right: 0;
    width: 6px;
    border-radius: 3px;
    background-color: #757575;
}

.tooltip {
    position: absolute;
    left: 1092px;
    top: -6px;
    width: 42px;
    height: 16px;
    background-color: #fff;
    border: 1px solid #777;
    border-radius: 3px;
    box-shadow: 1px 2px 4px rgba(0, 0, 0, 0.3);
    font-size: 10px;
    line-height: 14px;
    text-align: center;
    white-space: nowrap;
    overflow: hidden;
    color: #444;
}

.copilot {
    position: absolute;
    left: 1294px;
    top: 381px;
    width: 38px;
    height: 38px;
    border-radius: 50%;
    background-color: #fff;
    border: 1px solid #e4e4e4;
    box-shadow: 0 1px 4px rgba(0, 0, 0, 0.25);
    display: flex;
    align-items: center;
    justify-content: center;
}

/* sheet tabs */
.sheetbar {
    height: 27px;
    flex: none;
    display: flex;
    align-items: center;
    position: relative;
}

.sheet-nav {
    width: 98px;
    padding: 0 0 2px 20px;
    display: flex;
    gap: 23px;
}

.sheet-tab {
    height: 24px;
    font-size: 13px;
    line-height: 22px;
    color: #444;
    align-self: flex-start;
}

.sheet-tab.active {
    width: 66px;
    text-align: center;
    background-color: #fff;
    border-radius: 0 0 5px 5px;
    position: relative;
}

.sheet-tab.active::after {
    content: "";
    position: absolute;
    left: 7px;
    right: 7px;
    bottom: 3px;
    height: 2px;
    background-color: #107c41;
}

.sheet-tab + .tab-sep + .sheet-tab {
    width: 62px;
    padding: 3px 0 0;
    text-align: center;
    font-size: 12.500px;
    letter-spacing: -1.500px;
}

.tab-sep {
    width: 1px;
    height: 16px;
    margin-left: 4px;
    background-color: #d0d0d0;
}

.sheet-tab + .tab-sep + .sheet-tab + .tab-sep {
    margin-left: 0;
}

.add-sheet {
    margin-left: 36px;
    font-size: 18px;
    font-weight: 300;
    color: #444;
}

.kebab {
    position: absolute;
    left: 824px;
    top: 9px;
    display: flex;
    flex-direction: column;
    gap: 2px;
}

.kebab i {
    width: 2px;
    height: 2px;
    background-color: #444;
}

.arrow-left,
.arrow-right {
    position: absolute;
    top: 9px;
    border-top: 4px solid transparent;
    border-bottom: 4px solid transparent;
}

.arrow-left {
    left: 844px;
    border-right: 6px solid #555;
}

.arrow-right {
    left: 1345px;
    border-left: 6px solid #555;
}

.hscroll {
    position: absolute;
    left: 855px;
    top: 9px;
    width: 484px;
    height: 8px;
    border-radius: 4px;
    background-color: #757575;
}

/* status bar */
.status {
    height: 15px;
    flex: none;
    background-color: #f3f3f3;
    display: flex;
    align-items: flex-start;
    position: relative;
    padding: 2px 0 0 7px;
    font-size: 11px;
    line-height: 18px;
    color: #555;
    overflow: hidden;
}

.status svg {
    margin-top: 2px;
}

.status > svg {
    margin-left: 19px;
}

.a11y {
    margin-left: 4px;
    font-size: 10.500px;
    letter-spacing: -0.400px;
    font-weight: 700;
    color: #333;
}

.views {
    position: absolute;
    left: 1098px;
    top: 0;
    display: flex;
}

.view {
    width: 36px;
    height: 15px;
    display: flex;
    justify-content: center;
    padding-top: 2px;
}

.view.on {
    background-color: #e0e0e0;
}

.zoom {
    position: absolute;
    left: 1210px;
    top: 0;
    width: 156px;
    display: flex;
    align-items: center;
    gap: 4px;
    height: 18px;
    font-size: 11px;
}

.slider {
    width: 90px;
    height: 1px;
    background-color: #aaa;
    position: relative;
}

.slider i {
    position: absolute;
    left: 44px;
    top: -5px;
    width: 4px;
    height: 11px;
    background-color: #555;
}

.pct {
    margin-left: 8px;
    white-space: nowrap;
}
```
